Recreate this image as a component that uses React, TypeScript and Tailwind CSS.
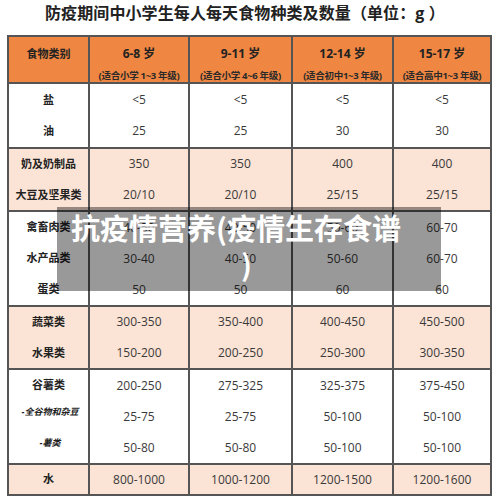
const FONT = "font-['Open_Sans','Noto_Sans_CJK_SC',sans-serif]"

type Line = { label: string; kind?: 'main' | 'sub'; values: string[] }

interface Group {
  shaded: boolean
  height: string
  lines: Line[]
}

const AGES = [
  { age: '6-8 岁', note: '(适合小学 1~3 年级)' },
  { age: '9-11 岁', note: '(适合小学 4~6 年级)' },
  { age: '12-14 岁', note: '(适合初中1~3 年级)' },
  { age: '15-17 岁', note: '(适合高中1~3 年级)' },
]

// heights include the 2px bottom border (border-box)
const GROUPS: Group[] = [
  {
    shaded: false,
    height: 'h-[65px]',
    lines: [
      { label: '盐', values: ['<5', '<5', '<5', '<5'] },
      { label: '油', values: ['25', '25', '30', '30'] },
    ],
  },
  {
    shaded: true,
    height: 'h-[63px]',
    lines: [
      { label: '奶及奶制品', values: ['350', '350', '400', '400'] },
      { label: '大豆及坚果类', values: ['20/10', '20/10', '25/15', '25/15'] },
    ],
  },
  {
    shaded: false,
    height: 'h-[95px]',
    lines: [
      { label: '禽畜肉类', values: ['40-50', '40-50', '50-60', '60-70'] },
      { label: '水产品类', values: ['30-40', '40-50', '50-60', '60-70'] },
      { label: '蛋类', values: ['50', '50', '60', '60'] },
    ],
  },
  {
    shaded: true,
    height: 'h-[63px]',
    lines: [
      { label: '蔬菜类', values: ['300-350', '350-400', '400-450', '450-500'] },
      { label: '水果类', values: ['150-200', '200-250', '250-300', '300-350'] },
    ],
  },
  {
    shaded: false,
    height: 'h-[95px]',
    lines: [
      { label: '谷薯类', values: ['200-250', '275-325', '325-375', '375-450'] },
      { label: '-全谷物和杂豆', kind: 'sub', values: ['25-75', '25-75', '50-100', '50-100'] },
      { label: '-薯类', kind: 'sub', values: ['50-80', '50-80', '50-100', '50-100'] },
    ],
  },
  {
    shaded: true,
    height: 'h-[29px]',
    lines: [{ label: '水', values: ['800-1000', '1000-1200', '1200-1500', '1200-1600'] }],
  },
]

const COLS = 'grid grid-cols-[79px_100px_103px_101px_1fr]'

function GroupRow({ group, last }: { group: Group; last: boolean }) {
  return (
    <div
      className={`${COLS} ${group.height} ${group.shaded ? 'bg-[#fbe3d5]' : 'bg-white'} ${
        last ? '' : 'border-b-2 border-[#555]'
      }`}
    >
      <div className="flex flex-col">
        {group.lines.map((line) => (
          <div key={line.label} className="flex-1 flex items-center justify-center">
            {line.kind === 'sub' ? (
              <span className="text-[9px] font-bold italic text-[#222] -translate-y-[5px] pl-[3px]">
                {line.label}
              </span>
            ) : (
              <span className="text-[11px] font-bold text-[#222]">{line.label}</span>
            )}
          </div>
        ))}
      </div>
      {[0, 1, 2, 3].map((c) => (
        <div key={c} className="flex flex-col border-l-2 border-[#555]">
          {group.lines.map((line) => (
            <div key={line.label} className="flex-1 flex items-center justify-center text-[12px] text-[#3a3a3a]">
              {line.values[c]}
            </div>
          ))}
        </div>
      ))}
    </div>
  )
}

export default function App() {
  return (
    <div className={`relative w-[500px] h-[498px] bg-white ${FONT} overflow-hidden`}>
      <div className="h-[35px] pl-[45px] pt-[3px] text-[16px] leading-[20px] font-bold text-[#222] tracking-[0.1px]">
        防疫期间中小学生每人每天食物种类及数量（单位：g ）
      </div>

      <div className="ml-[7px] w-[485px] border-2 border-[#555]">
        <div className={`${COLS} h-[47px] bg-[#ef8641] border-b-2 border-[#555]`}>
          <div className="flex items-start justify-center pt-[9px] text-[11px] font-bold text-[#222]">
            食物类别
          </div>
          {AGES.map((a) => (
            <div key={a.age} className="flex flex-col items-center border-l-2 border-[#555]">
              <div className="pt-[9px] text-[12px] font-bold text-[#222] leading-[16px]">{a.age}</div>
              <div className="pt-[8px] text-[9.5px] font-bold text-[#2a2a2a] leading-[12px] tracking-[-0.3px]">
                {a.note}
              </div>
            </div>
          ))}
        </div>

        {GROUPS.map((g, i) => (
          <GroupRow key={i} group={g} last={i === GROUPS.length - 1} />
        ))}
      </div>

      <div className="absolute left-[57px] top-[207px] w-[384px] h-[84px] bg-black/40 text-white font-bold text-[29px] leading-[37px] font-['Noto_Sans_CJK_SC',sans-serif]">
        <div className="pl-[14px] pt-[2px]">抗疫情营养(疫情生存食谱</div>
        <div className="pl-[184px] -mt-[1px]">)</div>
      </div>
    </div>
  )
}
